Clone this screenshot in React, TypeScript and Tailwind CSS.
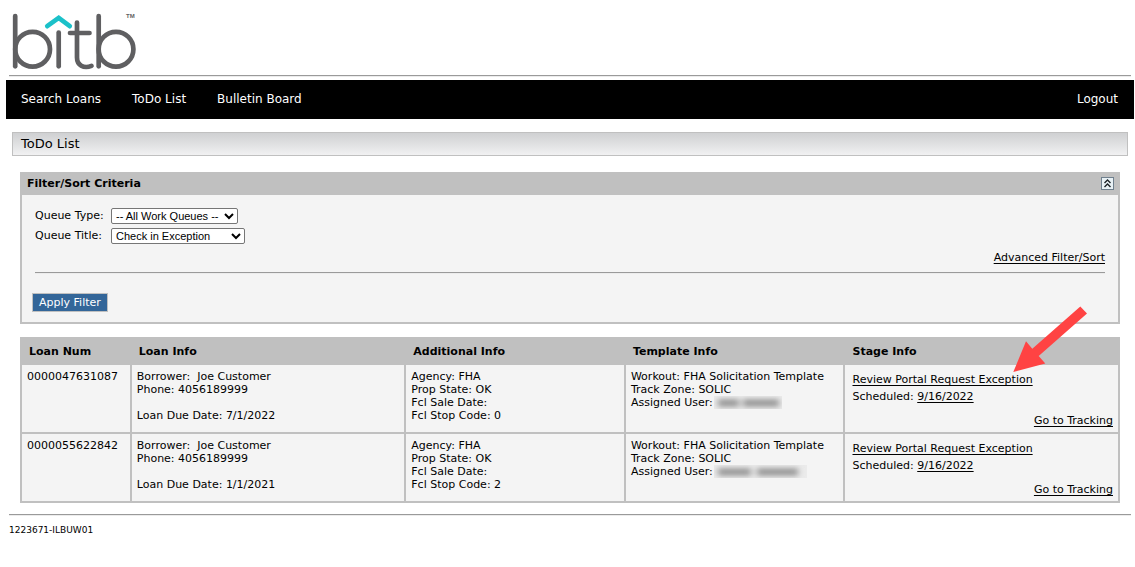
import React from "react";

type Loan = {
  num: string;
  borrower: string;
  phone: string;
  due: string;
  stop: string;
  userWidth: number;
  userWords: [number, number][];
};

const loans: Loan[] = [
  { num: "0000047631087", borrower: "Joe Customer", phone: "4056189999", due: "7/1/2022", stop: "0", userWidth: 68, userWords: [[4, 21], [29, 36]] },
  { num: "0000055622842", borrower: "Joe Customer", phone: "4056189999", due: "1/1/2021", stop: "2", userWidth: 93, userWords: [[4, 33], [43, 41]] },
];

const columns = [
  { label: "Loan Num", width: "w-[10%]" },
  { label: "Loan Info", width: "w-[25%]" },
  { label: "Additional Info", width: "w-[20%]" },
  { label: "Template Info", width: "w-[20%]" },
  { label: "Stage Info", width: "w-[25%]" },
];

function Logo() {
  return (
    <svg width="126" height="60" viewBox="11 12 126 60" fill="none" strokeLinecap="round" strokeLinejoin="round" role="img" aria-label="bitb">
      <g stroke="#5f5f61" strokeWidth="4.7">
        <path d="M15.2 16V66.300" />
        <circle cx="32.6" cy="49.2" r="17.4" />
        <path d="M58.700 32.500V66.300" />
        <path d="M77 22.500V57.500C77 65 83.500 69 91.500 65.900" />
        <path d="M70 33H89.500" />
        <path d="M98.700 16V66.300" />
        <circle cx="116" cy="49.2" r="17.4" />
      </g>
      <path d="M47.200 26.200L58.700 17.800L69.800 26.200" stroke="#1bc1c9" strokeWidth="4.6" strokeLinejoin="miter" />
      <text x="126" y="17.500" fontSize="6" fontWeight="bold" fill="#5f5f61" className="font-['Liberation_Sans',sans-serif]">TM</text>
    </svg>
  );
}

function Rule() {
  return <hr className="h-[2px] border-0 border-t border-b border-t-[#9a9a9a] border-b-[#ececec]" />;
}

function HiddenName({ id, width, words }: { id: string; width: number; words: [number, number][] }) {
  return (
    <svg width={width} height="13" aria-hidden="true" className="shrink-0">
      <defs>
        <filter id={id} x="-20%" y="-100%" width="140%" height="300%">
          <feGaussianBlur stdDeviation="3 2.500" />
        </filter>
      </defs>
      <rect width={width} height="13" fill="#ebebeb" />
      <g filter={`url(#${id})`} fill="#9c9c9c">
        {words.map(([x, w]) => (
          <rect key={x} x={x} y="3" width={w} height="8" />
        ))}
      </g>
    </svg>
  );
}

const link = "underline underline-offset-2";
const select = "h-4 rounded-[2px] border border-[#767676] bg-white font-['Liberation_Sans',sans-serif] text-[11px] leading-[13px]";
const cell = "border-2 border-[#c0c0c0] px-[5px] pt-[5px] pb-[10px] align-top";

export default function App() {
  return (
    <div className="bg-white pr-px pl-1.5 font-['DejaVu_Sans',sans-serif] text-[11px] leading-[13px] text-black">
      <header>
        <div className="flex h-[75px] items-end px-[5px] pb-[3px]">
          <Logo />
        </div>
        <div className="px-[3px]">
          <Rule />
        </div>
        <nav className="mt-[3px] flex h-[39px] items-center gap-[31px] bg-black px-4 pl-[15px] text-[12px] text-white">
          <a href="#search">Search Loans</a>
          <a href="#todo">ToDo List</a>
          <a href="#bulletin">Bulletin Board</a>
          <a href="#logout" className="ml-auto">Logout</a>
        </nav>
      </header>

      <main className="px-1.5">
        <h1 className="mt-[13px] flex h-6 items-center border border-[#c0c0c0] bg-linear-to-b from-[#cfd0d2] to-[#f1f1f2] px-2 text-[13px] leading-4">
          ToDo List
        </h1>

        <div className="px-2">
          <section className="mt-4 border-2 border-t-0 border-[#c0c0c0] bg-[#f4f4f4]">
            <div className="flex h-[23px] items-center justify-between bg-[#c0c0c0] pr-1 pl-[5px]">
              <h2 className="font-bold">Filter/Sort Criteria</h2>
              <button type="button" aria-label="Collapse filter">
                <svg width="13" height="13" viewBox="0 0 13 13" fill="none">
                  <rect x=".5" y=".5" width="12" height="12" fill="#e8f1f5" stroke="#70808e" />
                  <path d="M3.500 6L6.500 3L9.500 6M3.500 10L6.500 7L9.500 10" stroke="#1c2226" strokeWidth="1.400" />
                </svg>
              </button>
            </div>
            <form className="pt-[13px] pr-[13px] pb-[10px] pl-[13px]" onSubmit={(e) => e.preventDefault()}>
              <div className="grid grid-cols-[76px_auto] justify-start gap-y-1">
                <label htmlFor="type" className="leading-4">Queue Type:</label>
                <select id="type" className={`w-[127px] ${select}`}>
                  <option>-- All Work Queues --</option>
                </select>
                <label htmlFor="title" className="leading-4">Queue Title:</label>
                <select id="title" className={`w-[134px] ${select}`}>
                  <option>Check in Exception</option>
                </select>
              </div>
              <div className="mt-[7px] mb-2 text-right">
                <a href="#advanced" className={link}>Advanced Filter/Sort</a>
              </div>
              <Rule />
              <button type="submit" className="mt-[19px] -ml-[3px] block h-[19px] border border-[#c0c0c0] bg-[#336699] px-1.5 text-white">
                Apply Filter
              </button>
            </form>
          </section>

          <div className="relative mt-[13px]">
            <table className="w-full table-fixed border-collapse bg-[#f4f4f4]">
              <thead>
                <tr className="h-[26px] bg-[#c0c0c0] text-left">
                  {columns.map((c) => (
                    <th key={c.label} className={`border-2 border-[#c0c0c0] px-[7px] font-bold ${c.width}`}>{c.label}</th>
                  ))}
                </tr>
              </thead>
              <tbody>
                {loans.map((l) => (
                  <tr key={l.num}>
                    <td className={cell}>{l.num}</td>
                    <td className={cell}>
                      <p>Borrower:&nbsp; {l.borrower}</p>
                      <p>Phone: {l.phone}</p>
                      <p className="mt-[13px]">Loan Due Date: {l.due}</p>
                    </td>
                    <td className={cell}>
                      <p>Agency: FHA</p>
                      <p>Prop State: OK</p>
                      <p>Fcl Sale Date:</p>
                      <p>Fcl Stop Code: {l.stop}</p>
                    </td>
                    <td className={cell}>
                      <p>Workout: FHA Solicitation Template</p>
                      <p>Track Zone: SOLIC</p>
                      <div className="flex h-[13px] items-center gap-px">
                        <span>Assigned User:</span>
                        <HiddenName id={`blur-${l.num}`} width={l.userWidth} words={l.userWords} />
                      </div>
                    </td>
                    <td className="border-2 border-[#c0c0c0] px-[7px] pt-1.5 pb-px align-top leading-[17px]">
                      <p><a href="#review" className={link}>Review Portal Request Exception</a></p>
                      <p>Scheduled: <a href="#date" className={link}>9/16/2022</a></p>
                      <p className="mt-[7px] -mr-[2px] text-right"><a href="#tracking" className={link}>Go to Tracking</a></p>
                    </td>
                  </tr>
                ))}
              </tbody>
            </table>
            <svg className="pointer-events-none absolute -top-8 right-8 h-[68px] w-[76px]" viewBox="1012 305 76 68" aria-hidden="true">
              <path d="M1013.300 372L1026 341.300L1032.300 348.700L1080.300 306.500L1087 313.500L1038.700 356L1045.300 363.500Z" fill="#ff4343" />
            </svg>
          </div>
        </div>
      </main>

      <footer className="mt-[11px] px-[3px]">
        <Rule />
        <p className="mt-2 text-[9px]">1223671-ILBUW01</p>
      </footer>
    </div>
  );
}
